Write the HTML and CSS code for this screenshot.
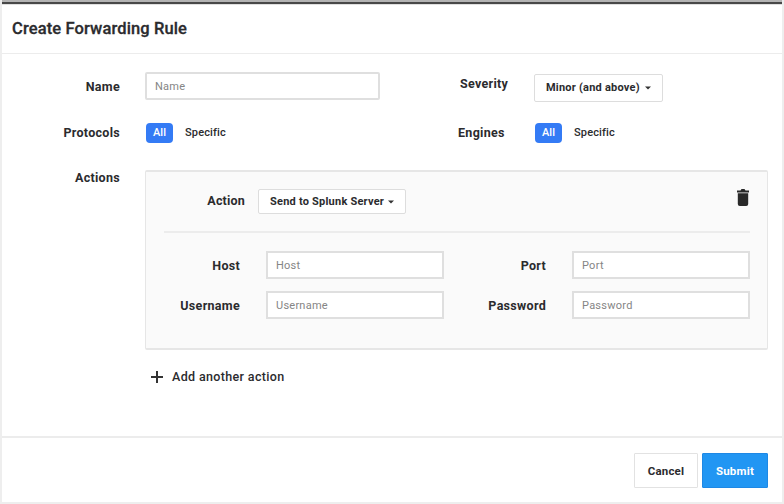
FILE: index.html
```html
<!DOCTYPE html>
<html lang="en">
<head>
<meta charset="utf-8">
<title>Create Forwarding Rule</title>
<link rel="stylesheet" href="styles.css">
</head>
<body>
<form class="dialog">
  <header class="dialog-header"><h1>Create Forwarding Rule</h1></header>
  <main class="dialog-body">
    <div class="row row-name">
      <label class="label">Name</label>
      <input class="input" type="text" placeholder="Name">
      <label class="label-right severity">Severity</label>
      <button type="button" class="dropdown dropdown-severity"><span>Minor (and above)</span><svg class="caret" viewBox="0 0 6 4"><path d="M0 .5h6L3 3.5z"/></svg></button>
    </div>
    <div class="row row-protocols">
      <label class="label">Protocols</label>
      <div class="toggle"><span class="pill">All</span><span class="specific">Specific</span></div>
      <label class="label-right">Engines</label>
      <div class="toggle"><span class="pill">All</span><span class="specific">Specific</span></div>
    </div>
    <div class="row row-actions">
      <label class="label actions-label">Actions</label>
      <section class="panel">
        <div class="action-head">
          <label class="action-label">Action</label>
          <button type="button" class="dropdown dropdown-action"><span>Send to Splunk Server</span><svg class="caret" viewBox="0 0 6 4"><path d="M0 .5h6L3 3.5z"/></svg></button>
          <svg class="trash" viewBox="0 0 12 17"><path d="M0 1.5h3.5L4.5 0h3l1 1.5H12v2H0zM.8 4.3h10.4V15q0 2-2 2H2.8q-2 0-2-2z"/></svg>
        </div>
        <div class="fields">
          <label>Host</label><input class="input" type="text" placeholder="Host">
          <label>Port</label><input class="input" type="text" placeholder="Port">
          <label>Username</label><input class="input" type="text" placeholder="Username">
          <label>Password</label><input class="input" type="text" placeholder="Password">
        </div>
      </section>
    </div>
    <div class="add"><svg class="plus" viewBox="0 0 12 12"><path d="M6 0v12M0 6h12"/></svg><span>Add another action</span></div>
  </main>
  <footer class="dialog-footer">
    <button type="button" class="btn">Cancel</button>
    <button type="button" class="btn btn-primary">Submit</button>
  </footer>
</form>
</body>
</html>
```
FILE: styles.css
```css
* { box-sizing: border-box; }
body { margin: 0; background: #fff; color: #2b2b2e; font: 700 12.5px/16px Roboto, "Liberation Sans", sans-serif; }
button, input { font: inherit; color: inherit; margin: 0; }
.dialog { width: 784px; height: 504px; display: flex; flex-direction: column; border: 2px solid #eee; border-top: 0; }
.dialog-header { height: 54px; padding: 4px 10px 0; border-bottom: 1px solid #ececec; background: linear-gradient(#b4b4b4 0 2px, #484848 2px 4px, #e0e0e0 4px 5px, #fff 5px); display: flex; align-items: center; }
h1 { margin: 0; font-size: 16.5px; line-height: 20px; font-weight: 500; -webkit-text-stroke: .3px; letter-spacing: .12px; }
.dialog-body { flex: 1; padding: 18px 14px 0 0; }
.row { display: grid; grid-template-columns: 118px 25px 235px 1px 153px 1fr; align-items: start; }
.label { grid-column: 1; text-align: right; letter-spacing: .3px; }
.row-name > .input, .row-protocols > .toggle { grid-column: 3; }
.label-right { grid-column: 5; letter-spacing: .3px; margin-left: 77px; }
.row-name > .dropdown, .row-protocols > .toggle:last-child { grid-column: 6; }
.row-name { height: 51px; }
.row-name .label { margin-top: 7px; }
.row-name .severity { margin-top: 4px; margin-left: 79px; }
.input { height: 28px; width: 100%; padding: 0 8px; border: 2px solid #dfdfdf; border-radius: 2px; background: #fff; font-weight: 400; font-size: 11px; letter-spacing: .25px; outline: 0; }
.input::placeholder { color: #858585; opacity: 1; }
.dropdown { display: flex; align-items: center; justify-content: space-between; border: 1px solid #ddd; border-radius: 2px; background: #fff; padding: 0 11px; white-space: nowrap; font-size: 11px; letter-spacing: .22px; }
.dropdown-severity { width: 129px; height: 28px; margin-top: 2px; }
.dropdown-action { width: 148px; height: 25px; }
.caret { width: 6px; height: 4px; fill: #333; }
.row-protocols { height: 47px; }
.row-protocols > .label, .row-protocols > .label-right { margin-top: 2px; }
.toggle { display: flex; align-items: center; height: 20px; font-size: 11px; }
.pill { width: 27px; height: 20px; border-radius: 4px; background: #347bf5; color: #fff; text-align: center; line-height: 20px; font-weight: 500; margin-left: 1px; }
.specific { margin-left: 12px; font-weight: 500; letter-spacing: .15px; }
.row-actions { grid-template-columns: 118px 623px; column-gap: 25px; }
.panel { height: 180px; border: 1px solid #e6e6e6; border-top-width: 2px; border-bottom-width: 2px; border-radius: 2px; background: #fafafa; padding: 0 17px 0 18px; }
.action-head { height: 61px; display: flex; align-items: flex-start; padding: 17px 0 0; border-bottom: 2px solid #ececec; }
.action-label { width: 81px; text-align: right; letter-spacing: .2px; margin: 4px 13px 0 0; }
.trash { width: 12px; height: 17px; margin-left: auto; margin-right: 1px; fill: #292929; }
.fields { display: grid; grid-template-columns: 76px 178px 76px 178px; column-gap: 26px; row-gap: 12px; padding-top: 18px; }
.fields label { text-align: right; padding-top: 7px; letter-spacing: .3px; white-space: nowrap; }
.fields .input { border-radius: 0; }
.add { display: flex; align-items: center; gap: 9px; margin: 19px 0 0 149px; font-weight: 500; letter-spacing: .35px; }
.plus { width: 12px; height: 12px; stroke: #333; stroke-width: 2; }
.dialog-footer { height: 68px; border-top: 2px solid #ececec; display: flex; justify-content: flex-end; gap: 4px; padding: 15px 14px 0 0; margin-bottom: -2px; }
.btn { width: 64px; height: 35px; border: 1px solid #e2e2e2; border-radius: 1px; background: #fff; padding: 0; font-size: 11.5px; letter-spacing: .2px; }
.btn-primary { width: 66px; background: #2196f3; border-color: #1e88e5; color: #fff; }
```
